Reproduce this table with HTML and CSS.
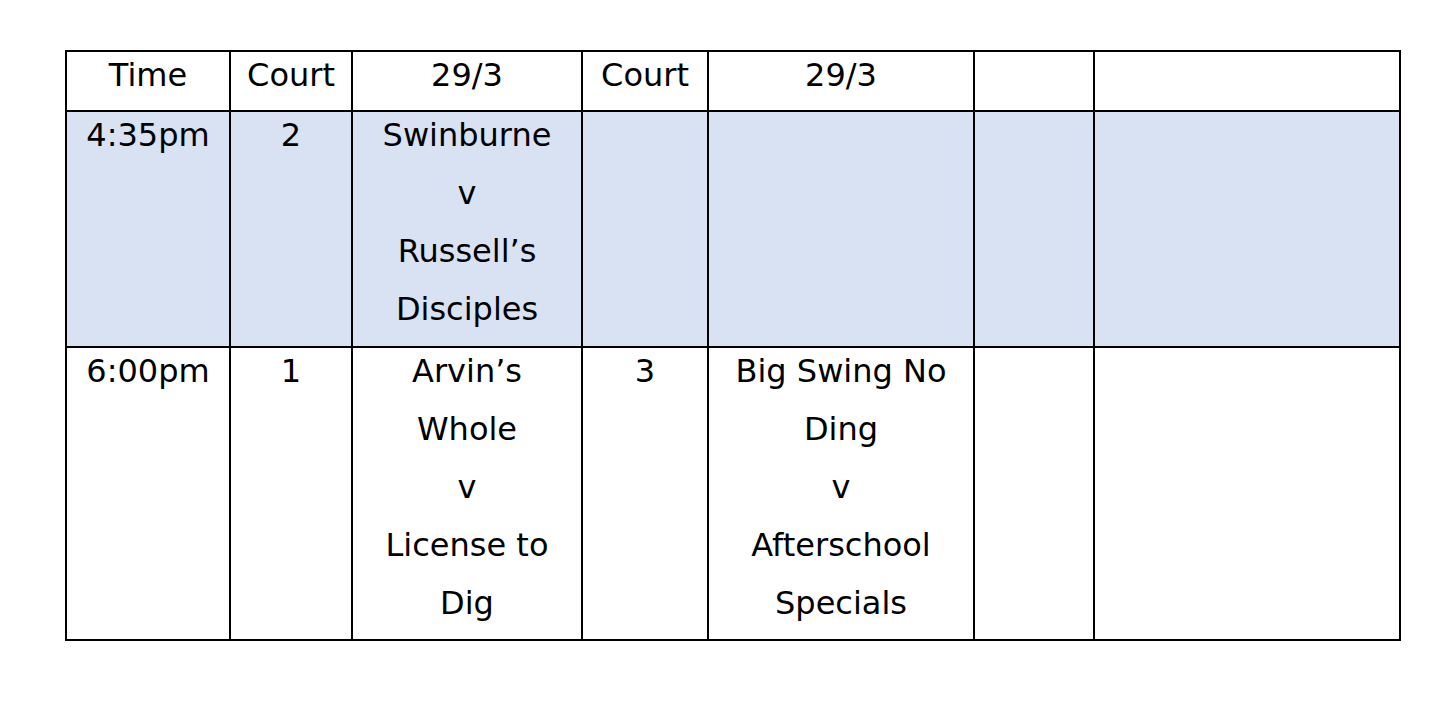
FILE: index.html
```html
<!DOCTYPE html>
<html>
<head>
<meta charset="utf-8">
<link rel="stylesheet" href="styles.css">
</head>
<body>
<div class="page">
<table class="schedule">
  <colgroup>
    <col class="c1"><col class="c2"><col class="c3"><col class="c4"><col class="c5"><col class="c6"><col class="c7">
  </colgroup>
  <tr>
    <td><div class="cell">Time</div></td>
    <td><div class="cell">Court</div></td>
    <td><div class="cell">29/3</div></td>
    <td><div class="cell">Court</div></td>
    <td><div class="cell">29/3</div></td>
    <td><div class="cell"></div></td>
    <td><div class="cell"></div></td>
  </tr>
  <tr class="shaded">
    <td><div class="cell">4:35pm</div></td>
    <td><div class="cell">2</div></td>
    <td><div class="cell">Swinburne<br>v<br>Russell’s<br>Disciples</div></td>
    <td><div class="cell"></div></td>
    <td><div class="cell"></div></td>
    <td><div class="cell"></div></td>
    <td><div class="cell"></div></td>
  </tr>
  <tr class="late">
    <td><div class="cell">6:00pm</div></td>
    <td><div class="cell">1</div></td>
    <td><div class="cell">Arvin’s<br>Whole<br>v<br>License to<br>Dig</div></td>
    <td><div class="cell">3</div></td>
    <td><div class="cell">Big Swing No<br>Ding<br>v<br>Afterschool<br>Specials</div></td>
    <td><div class="cell"></div></td>
    <td><div class="cell"></div></td>
  </tr>
</table>
</div>
</body>
</html>
```
FILE: styles.css
```css
html, body {
  margin: 0;
  padding: 0;
  background: #ffffff;
}
.page {
  padding: 50px 0 0 65px;
}
.schedule {
  border-collapse: collapse;
  table-layout: fixed;
  width: 1336px;
  font-family: "DejaVu Sans", Verdana, sans-serif;
  font-size: 32px;
  color: #000000;
}
.c1 { width: 164px; }
.c2 { width: 122px; }
.c3 { width: 230px; }
.c4 { width: 126px; }
.c5 { width: 266px; }
.c6 { width: 120px; }
.c7 { width: 306px; }
.schedule td {
  border: 2px solid #000000;
  padding: 0;
  vertical-align: top;
  text-align: center;
}
.cell {
  line-height: 58px;
  min-height: 58px;
  margin-top: -6px;
  margin-bottom: 6px;
  white-space: nowrap;
}
.shaded td {
  background: #d9e2f3;
}
.shaded .cell {
  min-height: 234px;
}
.late .cell {
  min-height: 291px;
}
```
